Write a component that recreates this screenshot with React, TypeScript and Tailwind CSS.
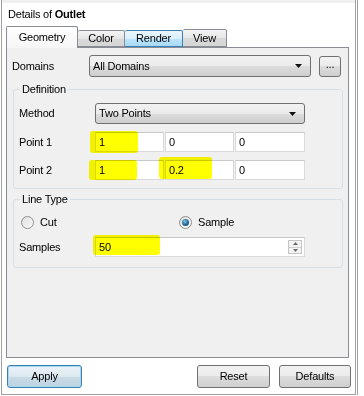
import React from "react";

const btnGrad =
  "bg-[linear-gradient(#f2f2f2_0%,#ebebeb_50%,#dddddd_50%,#cfcfcf_100%)]";

function Arrow() {
  return (
    <svg width="7" height="4" viewBox="0 0 7 4" className="block">
      <path d="M0 0H7L3.5 4Z" fill="#111" />
    </svg>
  );
}

function Combo({ text, className }: { text: string; className: string }) {
  return (
    <div
      className={`flex items-center rounded-[3px] border border-[#707070] ${btnGrad} pl-[3px] pr-[8px] ${className}`}
    >
      <span className="flex-1 leading-none">{text}</span>
      <Arrow />
    </div>
  );
}

function Field({ text, className }: { text: string; className: string }) {
  return (
    <div
      className={`flex items-center border border-[#dadada] border-t-[#c8c8c8] bg-white pl-[3px] ${className}`}
    >
      <span className="leading-none">{text}</span>
    </div>
  );
}

function Radio({ checked }: { checked?: boolean }) {
  return (
    <div className="flex h-[13px] w-[13px] items-center justify-center rounded-full border border-[#8e8f8f] bg-[linear-gradient(135deg,#dcdcdc,#ffffff)]">
      {checked ? (
        <div className="h-[7px] w-[7px] rounded-full bg-[radial-gradient(circle_at_40%_35%,#7fc3e6,#1b5f8e_60%,#0e3f66)]" />
      ) : (
        <div className="h-[9px] w-[9px] rounded-full bg-[linear-gradient(135deg,#e2e2e2,#f6f6f6)]" />
      )}
    </div>
  );
}

function Button({ label, className }: { label: string; className: string }) {
  return (
    <div
      className={`flex h-[23px] items-center justify-center rounded-[3px] border ${className}`}
    >
      <span className="leading-none">{label}</span>
    </div>
  );
}

export default function App() {
  return (
    <div className="flex h-[396px] w-[364px] bg-white font-['Liberation_Sans',Arial,sans-serif] text-[11px] tracking-[-0.2px] text-black">
      {/* main frame */}
      <div className="ml-[1px] flex h-[395px] w-[355px] flex-col border-b border-l border-r border-[#a0a0a0]">
        <div className="h-[3px] bg-[#f0f0f0]" />
        <div className="flex h-[23px] items-center pl-[6px]">
          <span>
            Details of <b>Outlet</b>
          </span>
        </div>

        {/* tabs */}
        <div className="relative z-10 flex h-[21px] items-end pl-[4px]">
          <div className="-mb-px flex h-[22px] w-[72px] items-center justify-center rounded-t-[2px] border border-b-0 border-[#898c95] bg-[linear-gradient(#ffffff,#f6f6f6)] pb-[1px]">
            Geometry
          </div>
          <div
            className={`flex h-[17px] w-[47px] items-center justify-center rounded-t-[2px] border border-l-0 border-[#898c95] bg-[linear-gradient(#f3f3f3,#e6e6e6_50%,#d9d9d9_51%,#d6d6d6)]`}
          >
            Color
          </div>
          <div className="flex h-[17px] w-[58px] items-center justify-center rounded-t-[2px] border border-l-0 border-[#3c7fb1] bg-[linear-gradient(#eaf6fd,#d9f0fc_50%,#bee6fd_51%,#a7d9f5)]">
            Render
          </div>
          <div className="flex h-[18px] w-[44px] items-center justify-center rounded-t-[2px] border border-l-0 border-[#898c95] bg-[linear-gradient(#f3f3f3,#e6e6e6_50%,#d9d9d9_51%,#d6d6d6)]">
            View
          </div>
        </div>

        {/* panel */}
        <div className="relative ml-[4px] flex h-[311px] w-[343px] flex-col border border-[#898c95] bg-[#f0f0f0]">
          {/* Domains row */}
          <div className="mt-[7px] flex h-[22px] items-center">
            <div className="w-[82px] pl-[5px]">Domains</div>
            <Combo text="All Domains" className="h-[22px] w-[222px]" />
            <div
              className={`ml-[8px] flex h-[21px] w-[22px] items-center justify-center rounded-[3px] border border-[#707070] ${btnGrad}`}
            >
              <span className="-mt-[3px] leading-none">...</span>
            </div>
          </div>

          {/* Definition group */}
          <div className="relative ml-[6px] mt-[12px] flex h-[100px] w-[330px] flex-col rounded-[3px] border border-[#d5dfe5]">
            <span className="absolute -top-[8px] left-[6px] bg-[#f0f0f0] px-[2px] leading-[14px]">
              Definition
            </span>
            <div className="mt-[13px] flex h-[21px] items-center">
              <div className="w-[81px] pl-[5px]">Method</div>
              <Combo text="Two Points" className="h-[21px] w-[210px]" />
            </div>
            <div className="mt-[8px] flex h-[20px] items-center">
              <div className="w-[81px] pl-[5px]">Point 1</div>
              <div className="flex gap-[1px]">
                <Field text="1" className="h-[20px] w-[69px]" />
                <Field text="0" className="h-[20px] w-[69px]" />
                <Field text="0" className="h-[20px] w-[70px]" />
              </div>
            </div>
            <div className="mt-[8px] flex h-[20px] items-center">
              <div className="w-[81px] pl-[5px]">Point 2</div>
              <div className="flex gap-[1px]">
                <Field text="1" className="h-[20px] w-[69px]" />
                <Field text="0.2" className="h-[20px] w-[69px]" />
                <Field text="0" className="h-[20px] w-[70px]" />
              </div>
            </div>
          </div>

          {/* Line Type group */}
          <div className="relative ml-[6px] mt-[10px] flex h-[69px] w-[330px] flex-col rounded-[3px] border border-[#d5dfe5]">
            <span className="absolute -top-[8px] left-[6px] bg-[#f0f0f0] px-[2px] leading-[14px]">
              Line Type
            </span>
            <div className="mt-[15px] flex h-[14px] items-center pl-[7px]">
              <div className="flex w-[158px] items-center gap-[6px]">
                <Radio />
                <span>Cut</span>
              </div>
              <div className="flex items-center gap-[6px]">
                <Radio checked />
                <span>Sample</span>
              </div>
            </div>
            <div className="mt-[8px] flex h-[20px] items-center">
              <div className="w-[81px] pl-[5px]">Samples</div>
              <div className="flex h-[20px] w-[210px] items-center border border-[#dadada] border-t-[#c8c8c8] bg-white pl-[3px] pr-[2px]">
                <span className="flex-1 leading-none">50</span>
                <div className="flex h-[14px] w-[14px] flex-col border border-[#c5c5c5] bg-[#f4f4f4]">
                  <div className="flex flex-1 items-center justify-center border-b border-[#d0d0d0]">
                    <svg width="5" height="3" viewBox="0 0 5 3">
                      <path d="M0 3H5L2.5 0Z" fill="#6a6a6a" />
                    </svg>
                  </div>
                  <div className="flex flex-1 items-center justify-center">
                    <svg width="5" height="3" viewBox="0 0 5 3">
                      <path d="M0 0H5L2.5 3Z" fill="#6a6a6a" />
                    </svg>
                  </div>
                </div>
              </div>
            </div>
          </div>

          {/* highlighter marks */}
          <div className="absolute left-[83px] top-[83px] h-[22px] w-[48px] rounded-[3px] bg-[#ffff00] mix-blend-multiply" />
          <div className="absolute left-[82px] top-[112px] h-[20px] w-[48px] rounded-[3px] bg-[#ffff00] mix-blend-multiply" />
          <div className="absolute left-[152px] top-[109px] h-[22px] w-[53px] rounded-[3px] bg-[#ffff00] mix-blend-multiply" />
          <div className="absolute left-[86px] top-[187px] h-[20px] w-[67px] rounded-[3px] bg-[#ffff00] mix-blend-multiply" />
        </div>

        {/* buttons */}
        <div className="mt-[7px] flex h-[23px] items-center pr-[4px]">
          <Button
            label="Apply"
            className="ml-[5px] w-[75px] border-[#3c7fb1] bg-[linear-gradient(#eaf3f8,#dde9f0_50%,#c9dbe6_51%,#bcd3e0)] shadow-[inset_0_0_0_1px_#a8d8f0]"
          />
          <Button
            label="Reset"
            className={`ml-auto w-[73px] border-[#707070] ${btnGrad}`}
          />
          <Button
            label="Defaults"
            className={`ml-[9px] w-[72px] border-[#707070] ${btnGrad}`}
          />
        </div>
      </div>
      <div className="ml-[1px] h-[395px] w-px bg-[#a0a0a0]" />
    </div>
  );
}
